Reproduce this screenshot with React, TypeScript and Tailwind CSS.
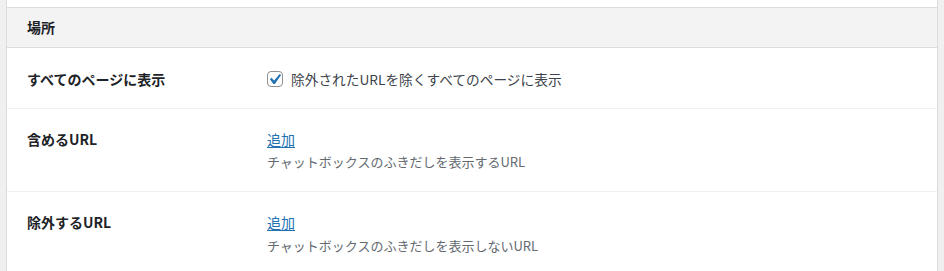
import React from "react";

const font = { fontFamily: '"Noto Sans CJK JP", "Noto Sans", sans-serif' };

function Check() {
  return (
    <span className="flex h-[16px] w-[16px] shrink-0 items-center justify-center rounded-[4px] border border-[#8c8f94] bg-white">
      <svg width="14" height="14" viewBox="4 3.5 13 12">
        <path d="M14.83 4.89l1.34.94-5.81 8.38H9.02L5.78 9.67l1.34-1.25 2.57 2.4z" fill="#2271b1" />
      </svg>
    </span>
  );
}

export default function App() {
  return (
    <div className="h-[271px] w-[944px] overflow-hidden bg-[#f0f0f0] px-[6px]" style={font}>
      <div className="h-full border-x border-[#dcdcde] bg-white">
        <div className="h-[7px] bg-white" />
        <div className="flex h-[41px] items-center border-y border-[#dcdcde] bg-[#f3f3f3] pl-[20px] text-[14px] font-semibold text-[#1d2327]">
          場所
        </div>
        <div className="flex border-b border-[#f0f0f1] pt-[21px] pb-[19px]">
          <div className="w-[260px] shrink-0 pl-[20px] text-[14px] font-semibold leading-[20px] text-[#1d2327]">
            すべてのページに表示
          </div>
          <label className="flex items-center gap-[8px] text-[13.7px] leading-[20px] text-[#3c434a]">
            <Check />
            除外されたURLを除くすべてのページに表示
          </label>
        </div>
        <div className="flex border-b border-[#f0f0f1] pt-[20px] pb-[19px]">
          <div className="w-[260px] shrink-0 pl-[20px] text-[14px] font-semibold leading-[20px] text-[#1d2327]">
            含めるURL
          </div>
          <div className="flex flex-col">
            <a className="text-[14px] leading-[20px] text-[#2271b1] underline underline-offset-2">追加</a>
            <p className="mt-[3px] text-[13px] leading-[20px] text-[#646970]">
              チャットボックスのふきだしを表示するURL
            </p>
          </div>
        </div>
        <div className="flex pt-[20px] pb-[19px]">
          <div className="w-[260px] shrink-0 pl-[20px] text-[14px] font-semibold leading-[20px] text-[#1d2327]">
            除外するURL
          </div>
          <div className="flex flex-col">
            <a className="text-[14px] leading-[20px] text-[#2271b1] underline underline-offset-2">追加</a>
            <p className="mt-[4px] text-[13px] leading-[20px] text-[#646970]">
              チャットボックスのふきだしを表示しないURL
            </p>
          </div>
        </div>
      </div>
    </div>
  );
}
